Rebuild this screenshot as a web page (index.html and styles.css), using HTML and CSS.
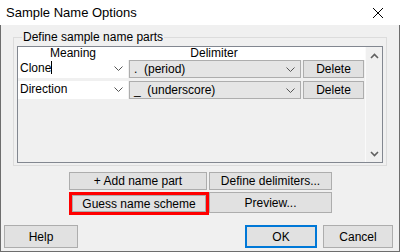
FILE: index.html
```html
<!DOCTYPE html>
<html lang="en">
<head>
  <meta charset="UTF-8">
  <title>Sample Name Options</title>
  <link rel="stylesheet" href="styles.css">
</head>
<body>
  <div class="titlebar">
    <span class="title">Sample Name Options</span>
    <span class="close">
      <svg width="12" height="12" viewBox="0 0 12 12"><path d="M1 1L11 11M11 1L1 11" stroke="#000" stroke-width="1" fill="none"/></svg>
    </span>
  </div>
  <div class="dialog">
    <fieldset class="group">
      <legend>Define sample name parts</legend>
      <div class="listview">
        <div class="list-body">
          <div class="list-header">
            <span>Meaning</span>
            <span>Delimiter</span>
            <span></span>
          </div>
          <div class="part-row">
            <div class="combo edit">Clone<span class="caret"></span><span class="chev"><svg width="9" height="6" viewBox="0 0 9 6"><path d="M0.5 0.5L4.5 4.5L8.5 0.5" stroke="#555" fill="none"/></svg></span></div>
            <div class="combo drop">.&nbsp; (period)<span class="chev"><svg width="9" height="6" viewBox="0 0 9 6"><path d="M0.5 0.5L4.5 4.5L8.5 0.5" stroke="#555" fill="none"/></svg></span></div>
            <button class="btn">Delete</button>
          </div>
          <div class="part-row">
            <div class="combo edit">Direction<span class="chev"><svg width="9" height="6" viewBox="0 0 9 6"><path d="M0.5 0.5L4.5 4.5L8.5 0.5" stroke="#555" fill="none"/></svg></span></div>
            <div class="combo drop">_&nbsp; (underscore)<span class="chev"><svg width="9" height="6" viewBox="0 0 9 6"><path d="M0.5 0.5L4.5 4.5L8.5 0.5" stroke="#555" fill="none"/></svg></span></div>
            <button class="btn">Delete</button>
          </div>
        </div>
        <div class="scrollbar">
          <svg width="9" height="6" viewBox="0 0 9 6"><path d="M1 5L4.5 1.5L8 5" stroke="#606060" stroke-width="1.6" fill="none"/></svg>
          <svg width="9" height="6" viewBox="0 0 9 6"><path d="M1 1L4.5 4.5L8 1" stroke="#606060" stroke-width="1.6" fill="none"/></svg>
        </div>
      </div>
    </fieldset>

    <div class="actions">
      <div class="action-row">
        <button class="btn add">+ Add name part</button>
        <button class="btn define">Define delimiters...</button>
      </div>
      <div class="action-row second">
        <button class="btn guess">Guess name scheme</button>
        <button class="btn preview">Preview...</button>
      </div>
    </div>

    <div class="footer">
      <button class="btn help">Help</button>
      <div class="footer-right">
        <button class="btn ok">OK</button>
        <button class="btn cancel">Cancel</button>
      </div>
    </div>
  </div>
</body>
</html>
```

FILE: styles.css
```css
body {
  margin: 0;
  width: 400px;
  height: 252px;
  overflow: hidden;
  background-color: #f0f0f0;
  font-family: "Liberation Sans", Arial, sans-serif;
  font-size: 12px;
  color: #000;
}
.titlebar {
  height: 25px;
  background: #fff;
  display: flex;
  align-items: center;
  justify-content: space-between;
  padding-left: 6px;
  padding-right: 16px;
}
.title {
  font-size: 13px;
}
.close {
  display: flex;
}
.dialog {
  border-left: 1px solid #6d6d6d;
  border-right: 1px solid #6d6d6d;
  border-bottom: 1px solid #6d6d6d;
  box-sizing: border-box;
  height: 227px;
  padding-top: 5px;
}
.group {
  margin: 0 0 0 12px;
  width: 374px;
  height: 136px;
  box-sizing: border-box;
  border: 1px solid #dcdcdc;
  padding: 2px 3px 2px 3px;
}
.group legend {
  padding: 0 1px;
  margin-left: 5px;
  line-height: 14px;
}
.listview {
  display: flex;
  height: 117px;
  border: 1px solid #828790;
  box-sizing: border-box;
}
.list-body {
  flex: 1;
}
.list-header {
  display: grid;
  grid-template-columns: 110px 172px 64px;
  height: 13px;
  line-height: 13px;
  text-align: center;
  background: #fff;
}
.part-row {
  display: grid;
  grid-template-columns: 110px 172px 62px;
  column-gap: 1px;
  height: 18px;
  margin-bottom: 3px;
}
.part-row .btn {
  margin-left: 1px;
}
.combo {
  position: relative;
  box-sizing: border-box;
  line-height: 17px;
  padding-left: 2px;
  white-space: nowrap;
  overflow: hidden;
}
.combo.edit {
  background: #fff;
}
.combo.drop {
  background: #e5e5e5;
  border: 1px solid #adadad;
  padding-left: 4px;
  line-height: 16px;
}
.chev {
  position: absolute;
  right: 5px;
  top: 6px;
  display: flex;
}
.caret {
  display: inline-block;
  width: 1px;
  height: 13px;
  background: #000;
  vertical-align: -2px;
}
.scrollbar {
  width: 16px;
  border-left: 1px solid #fafafa;
  display: flex;
  flex-direction: column;
  justify-content: space-between;
  align-items: center;
  padding: 6px 0 5px;
}
.btn {
  font-family: inherit;
  font-size: 12px;
  background: #e1e1e1;
  border: 1px solid #adadad;
  padding: 0;
  margin: 0;
  color: #000;
  box-sizing: border-box;
}
.actions {
  margin-left: 68px;
  margin-top: 6px;
}
.action-row {
  display: flex;
  gap: 1px;
}
.action-row .btn {
  height: 18px;
}
.add {
  width: 138px;
}
.define {
  width: 123px;
  margin-left: 1px;
}
.action-row.second {
  margin-top: 2px;
  gap: 0;
}
.action-row.second .btn {
  height: 21px;
}
.guess {
  width: 134px;
  margin: 3px 3px 0 3px;
  outline: 3px solid #ff0000;
  height: 17px !important;
}
.preview {
  width: 123px;
}
.footer {
  display: flex;
  justify-content: space-between;
  padding: 0 6px 0 3px;
  margin-top: 12px;
}
.footer .btn {
  height: 23px;
}
.help {
  width: 74px;
}
.footer-right {
  display: flex;
  gap: 6px;
}
.ok {
  width: 72px;
  border: 2px solid #0078d7;
}
.cancel {
  width: 70px;
}
```
